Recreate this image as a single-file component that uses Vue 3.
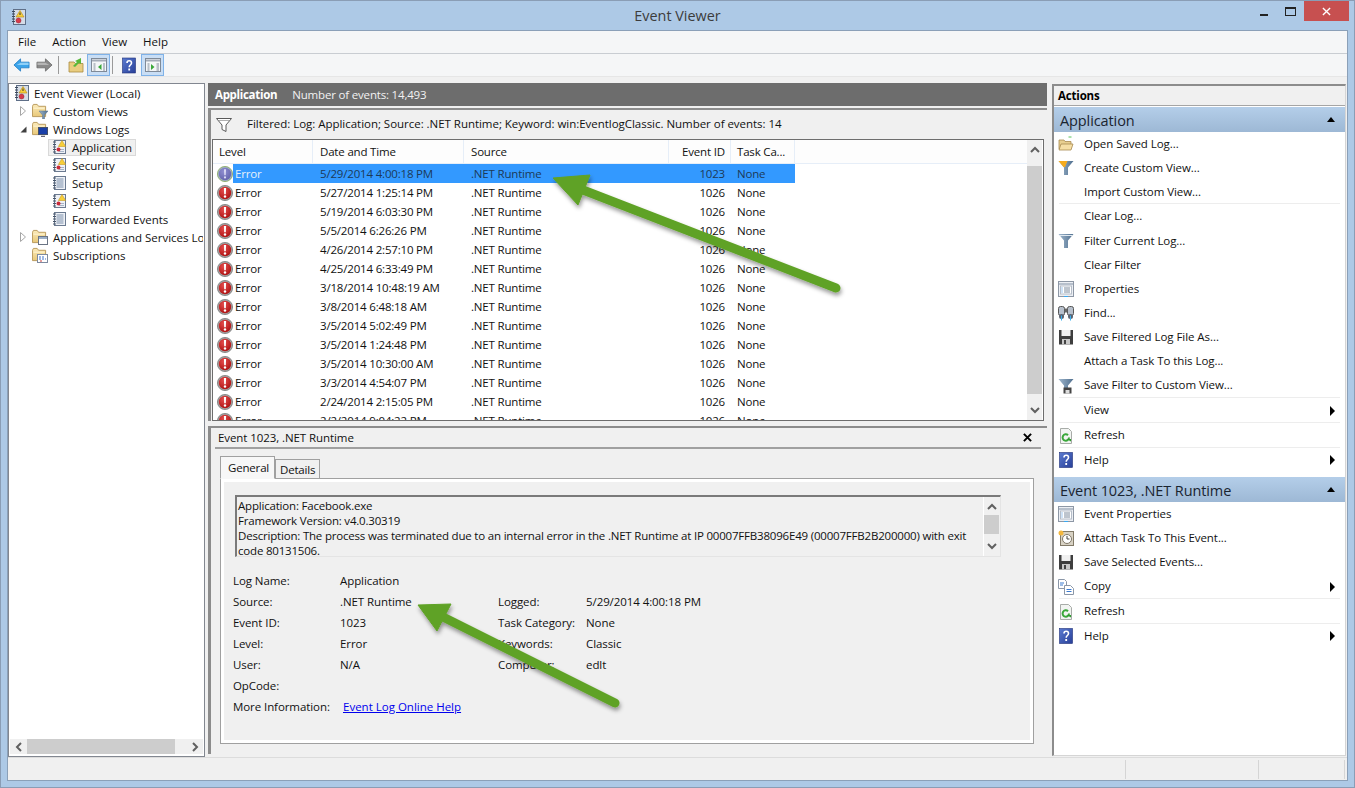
<script setup>
const menus = ['File', 'Action', 'View', 'Help']
const tree = [
  { t: 'Event Viewer (Local)', l: 0, i: 'i-evlog' },
  { t: 'Custom Views', l: 1, i: 'i-fold-funnel', x: 'closed' },
  { t: 'Windows Logs', l: 1, i: 'i-fold-mon', x: 'open' },
  { t: 'Application', l: 2, i: 'i-log-alert', sel: true },
  { t: 'Security', l: 2, i: 'i-log-alert' },
  { t: 'Setup', l: 2, i: 'i-log' },
  { t: 'System', l: 2, i: 'i-log-alert' },
  { t: 'Forwarded Events', l: 2, i: 'i-log' },
  { t: 'Applications and Services Logs', l: 1, i: 'i-fold-win', x: 'closed' },
  { t: 'Subscriptions', l: 1, i: 'i-fold-sub' },
]
const events = [
  ['5/29/2014 4:00:18 PM', '1023'],
  ['5/27/2014 1:25:14 PM', '1026'],
  ['5/19/2014 6:03:30 PM', '1026'],
  ['5/5/2014 6:26:26 PM', '1026'],
  ['4/26/2014 2:57:10 PM', '1026'],
  ['4/25/2014 6:33:49 PM', '1026'],
  ['3/18/2014 10:48:19 AM', '1026'],
  ['3/8/2014 6:48:18 AM', '1026'],
  ['3/5/2014 5:02:49 PM', '1026'],
  ['3/5/2014 1:24:48 PM', '1026'],
  ['3/5/2014 10:30:00 AM', '1026'],
  ['3/3/2014 4:54:07 PM', '1026'],
  ['2/24/2014 2:15:05 PM', '1026'],
  ['2/2/2014 9:04:22 PM', '1026'],
]
const fields = [
  ['Log Name:', 'Application', '', ''],
  ['Source:', '.NET Runtime', 'Logged:', '5/29/2014 4:00:18 PM'],
  ['Event ID:', '1023', 'Task Category:', 'None'],
  ['Level:', 'Error', 'Keywords:', 'Classic'],
  ['User:', 'N/A', 'Computer:', 'edlt'],
  ['OpCode:', '', '', ''],
]
const actionsA = [
  { t: 'Open Saved Log...', i: 'i-open' },
  { t: 'Create Custom View...', i: 'i-funnel-new' },
  { t: 'Import Custom View...', sep: true },
  { t: 'Clear Log...', tall: true },
  { t: 'Filter Current Log...', i: 'i-funnel' },
  { t: 'Clear Filter' },
  { t: 'Properties', i: 'i-props' },
  { t: 'Find...', i: 'i-find' },
  { t: 'Save Filtered Log File As...', i: 'i-save' },
  { t: 'Attach a Task To this Log...' },
  { t: 'Save Filter to Custom View...', i: 'i-funnel-save', sep: true, tall: true },
  { t: 'View', sub: true, sep: true, tall: true },
  { t: 'Refresh', i: 'i-refresh', sep: true, tall: true },
  { t: 'Help', i: 'i-help', sub: true },
]
const actionsB = [
  { t: 'Event Properties', i: 'i-props' },
  { t: 'Attach Task To This Event...', i: 'i-clock' },
  { t: 'Save Selected Events...', i: 'i-save' },
  { t: 'Copy', i: 'i-copy', sub: true, sep: true, tall: true },
  { t: 'Refresh', i: 'i-refresh', sep: true, tall: true },
  { t: 'Help', i: 'i-help', sub: true },
]
const sections = [
  { title: 'Application', items: actionsA },
  { title: 'Event 1023, .NET Runtime', items: actionsB },
]
</script>

<template>
  <div class="win">
    <svg class="sprite" aria-hidden="true">
      <defs>
        <radialGradient id="g-red" cx="40%" cy="30%" r="80%"><stop offset="0" stop-color="#e44c4c"/><stop offset="1" stop-color="#a80c0c"/></radialGradient>
        <radialGradient id="g-blue" cx="40%" cy="30%" r="80%"><stop offset="0" stop-color="#8f8ed0"/><stop offset="1" stop-color="#6060a8"/></radialGradient>
        <linearGradient id="g-funnel" x1="0" y1="0" x2="1" y2="0"><stop offset="0" stop-color="#9fb6cc"/><stop offset="1" stop-color="#4f6f8f"/></linearGradient>
        <linearGradient id="g-fold" x1="0" y1="0" x2="0" y2="1"><stop offset="0" stop-color="#fbeab8"/><stop offset="1" stop-color="#e8c878"/></linearGradient>
        <linearGradient id="g-help" x1="0" y1="0" x2="1" y2="1"><stop offset="0" stop-color="#5a7ad0"/><stop offset="1" stop-color="#283f98"/></linearGradient>
      </defs>
      <symbol id="i-err" viewBox="0 0 16 16">
        <circle cx="8" cy="8" r="7.6" fill="#a4a4a4" stroke="#6e6e6e" stroke-width=".7"/>
        <circle cx="8" cy="8" r="6.2" fill="url(#g-red)"/>
        <path d="M6.900 3h2.200l-.3 6.200h-1.600z" fill="#fff"/><circle cx="8" cy="11.500" r="1.200" fill="#fff"/>
      </symbol>
      <symbol id="i-err-sel" viewBox="0 0 16 16">
        <circle cx="8" cy="8" r="7.6" fill="#9fb0c0" stroke="#86a860" stroke-width=".8"/>
        <circle cx="8" cy="8" r="6.2" fill="url(#g-blue)"/>
        <path d="M7 3.2h2l-.3 6h-1.400z" fill="#dcdcf4"/><circle cx="8" cy="11.400" r="1.100" fill="#dcdcf4"/>
      </symbol>
      <symbol id="i-log" viewBox="0 0 16 16">
        <rect x="2.500" y="1.500" width="11" height="13" fill="#eef1f6" stroke="#6b7a90"/>
        <path d="M4.500 4h7M4.500 6h7M4.500 8h7M4.500 10h7M4.500 12h7" stroke="#7d90ab"/>
        <path d="M1 3h3M1 5.500h3M1 8h3M1 10.500h3M1 13h3" stroke="#48566a"/>
      </symbol>
      <symbol id="i-log-alert" viewBox="0 0 16 16">
        <rect x="2.500" y="1.500" width="11" height="13" fill="#eef1f6" stroke="#6b7a90"/>
        <path d="M1 3h3M1 5.500h3M1 8h3M1 10.500h3M1 13h3" stroke="#48566a"/>
        <path d="M7 10.500h5M7 12.500h5" stroke="#a8b4c6"/>
        <path d="M10 1.500l3.600 6h-7.200z" fill="#f7cf3a" stroke="#c79a20" stroke-width=".6"/>
        <circle cx="6.500" cy="10.500" r="2" fill="#c82a3a"/>
      </symbol>
      <symbol id="i-evlog" viewBox="0 0 16 16">
        <rect x="2.500" y=".5" width="12" height="15" fill="#d5dce6" stroke="#5f6f88"/>
        <path d="M1 2.500h3M1 5h3M1 7.500h3M1 10h3M1 12.500h3" stroke="#3e4a5c"/>
        <path d="M9 1.500l4 6.500h-8z" fill="#f7cf3a" stroke="#b88a10" stroke-width=".6"/>
        <path d="M9 3.500v2.500" stroke="#333"/>
        <circle cx="7.500" cy="11.500" r="2.500" fill="#d83a4a" stroke="#902030" stroke-width=".5"/>
      </symbol>
      <symbol id="i-folder" viewBox="0 0 16 16">
        <path d="M.5 3.500V14.500h14V3.500H7L5.500 1.500h-4z" fill="url(#g-fold)" stroke="#b8985a"/>
        <path d="M1.500 5.500h12" stroke="#fff6d8"/>
      </symbol>
      <symbol id="i-fold-funnel" viewBox="0 0 16 16">
        <use href="#i-folder" width="15" height="15"/>
        <path d="M7 8h9l-3.500 4v4h-2v-4z" fill="url(#g-funnel)" stroke="#56708a" stroke-width=".5"/>
      </symbol>
      <symbol id="i-fold-mon" viewBox="0 0 16 16">
        <use href="#i-folder" width="15" height="15"/>
        <rect x="6.500" y="6.500" width="9" height="7" fill="#1a3fa8" stroke="#44506a"/>
        <path d="M9 15.500h4" stroke="#667" stroke-width="1.500"/>
      </symbol>
      <symbol id="i-fold-win" viewBox="0 0 16 16">
        <use href="#i-folder" width="15" height="15"/>
        <rect x="6.500" y="7.500" width="9" height="8" fill="#fff" stroke="#6a7484"/>
        <path d="M7 9h8" stroke="#9cb0c8" stroke-width="2"/>
      </symbol>
      <symbol id="i-fold-sub" viewBox="0 0 16 16">
        <use href="#i-folder" width="15" height="15"/>
        <rect x="5.500" y="7.500" width="10" height="8" fill="#fff" stroke="#7d8aa0"/>
        <path d="M7 10h2M10 10h2M7 12h2M10 12h2M13 12h1" stroke="#3a70c8"/>
        <path d="M8 14h2" stroke="#c83a3a"/>
      </symbol>
      <symbol id="i-funnel-line" viewBox="0 0 16 16">
        <path d="M.5 1.500h15L10 8v6.500L6 12.500V8z" fill="#fff" stroke="#5a5a5a"/>
        <path d="M3 3.500h10" stroke="#b0b0b0"/>
      </symbol>
      <symbol id="i-funnel" viewBox="0 0 16 16">
        <path d="M.5 1h15L10 7.500V15H6V7.500z" fill="url(#g-funnel)"/>
        <path d="M2 2.500h12" stroke="#dfe8f0"/>
      </symbol>
      <symbol id="i-funnel-new" viewBox="0 0 16 16">
        <path d="M.5 1h15L10 7.500V15H6V7.500z" fill="url(#g-funnel)"/>
        <path d="M.5 1h9L7 7H5.500z" fill="#f5ab1e"/>
      </symbol>
      <symbol id="i-funnel-save" viewBox="0 0 16 16">
        <path d="M.5 1h15L10 7.500V10H6V7.500z" fill="url(#g-funnel)"/>
        <rect x="5.500" y="9.500" width="8" height="6" fill="#444"/><rect x="7.500" y="12" width="4" height="3.500" fill="#ddd"/>
      </symbol>
      <symbol id="i-open" viewBox="0 0 16 16">
        <path d="M1 4h5l1 1.500h6V13H1z" fill="#e8cf90" stroke="#a88a50" stroke-width=".8"/>
        <path d="M1 14l2-6h12l-2 6z" fill="#f6dfa6" stroke="#a88a50" stroke-width=".8"/>
        <path d="M10.500 1h3" stroke="#58c458"/>
      </symbol>
      <symbol id="i-props" viewBox="0 0 16 16">
        <rect x=".5" y=".5" width="15" height="15" fill="#eceff4" stroke="#8d97a5"/>
        <path d="M1 3h14" stroke="#b7c0cc" stroke-width="2"/>
        <rect x="2.500" y="5" width="11" height="8" fill="#fff" stroke="#b5bdc8"/>
        <path d="M6 7h6M6 9h6M6 11h6" stroke="#7d8a9c"/>
        <path d="M3.500 7h1M3.500 9h1M3.500 11h1" stroke="#3a8adf"/>
        <path d="M6 15.500h4" stroke="#3aa8ef"/>
      </symbol>
      <symbol id="i-find" viewBox="0 0 16 16">
        <rect x=".5" y="1.500" width="6" height="9" rx="2" fill="#b7c0cc" stroke="#555"/>
        <rect x="9.500" y="1.500" width="6" height="9" rx="2" fill="#b7c0cc" stroke="#555"/>
        <rect x="6.500" y="3.500" width="3" height="4" fill="#666"/>
        <circle cx="3.500" cy="11.500" r="2.500" fill="#5a6270"/><circle cx="12.500" cy="11.500" r="2.500" fill="#5a6270"/>
        <path d="M3.500 10.500v5M12.500 10.500v5" stroke="#3ab0ef"/>
      </symbol>
      <symbol id="i-save" viewBox="0 0 16 16">
        <path d="M1 1h14v14.500H1z" fill="#3e3e3e"/>
        <rect x="3.500" y="1" width="9" height="6" fill="#f0f0f0"/>
        <rect x="4" y="10" width="8" height="5.500" fill="#c9c9c9"/>
        <rect x="6" y="11" width="2" height="4" fill="#444"/>
      </symbol>
      <symbol id="i-refresh" viewBox="0 0 16 16">
        <path d="M2.500.5h8l3 3v12h-11z" fill="#f2f4f2" stroke="#a8aca8"/>
        <path d="M11 9.500a3.200 3.200 0 1 1-1-2.300" fill="none" stroke="#3aa83a" stroke-width="2"/>
        <path d="M8.500 11h4.500v2.500z" fill="#2e9a2e"/>
      </symbol>
      <symbol id="i-help" viewBox="0 0 16 16">
        <rect x="1.500" y=".5" width="13" height="15" fill="url(#g-help)" stroke="#1e2f78" stroke-width=".6"/>
        <path d="M6 5.500c0-3 4.500-3 4.500 0 0 2-2.300 2-2.300 4.200" fill="none" stroke="#fff" stroke-width="1.600"/>
        <rect x="7.300" y="11" width="1.800" height="2" fill="#fff"/>
      </symbol>
      <symbol id="i-clock" viewBox="0 0 16 16">
        <rect x="2.500" y="1.500" width="13" height="14" fill="#d8d2c4" stroke="#827a68"/>
        <circle cx="9" cy="9" r="4.500" fill="#fff" stroke="#807868"/>
        <path d="M9 6v3h2.500" fill="none" stroke="#444"/>
        <circle cx="3" cy="3" r="2.500" fill="#f3b63c"/>
      </symbol>
      <symbol id="i-copy" viewBox="0 0 16 16">
        <path d="M.5.500h6l2 2v7h-8z" fill="#fff" stroke="#8b97a8"/>
        <path d="M6.500 6.500h6l3 3v6h-9z" fill="#fff" stroke="#8b97a8"/>
        <path d="M2 4h4M2 6h3M8.500 10.500h5M8.500 12.500h5" stroke="#3a7ad0"/>
      </symbol>
      <symbol id="i-back" viewBox="0 0 18 16">
        <path d="M1 8l7-6.500V5h9v6H8v3.500z" fill="#3ca4ea" stroke="#1a78c0" stroke-width=".8"/>
        <path d="M8 5.500h8.500V8H4z" fill="#8fd0f8"/>
      </symbol>
      <symbol id="i-fwd" viewBox="0 0 18 16">
        <path d="M17 8l-7-6.500V5H1v6h9v3.500z" fill="#8a8a8a" stroke="#666" stroke-width=".8"/>
        <path d="M10 5.500H1.500V8H14z" fill="#b5b5b5"/>
      </symbol>
      <symbol id="i-up" viewBox="0 0 16 16">
        <path d="M1 5h5l1.500 1.500h7.500V15H1z" fill="#e9cd80" stroke="#a88a40" stroke-width=".8"/>
        <path d="M5 9l4-4-2-1 6-3v6l-2-1-4 4z" fill="#58b83a"/>
      </symbol>
      <symbol id="i-tree" viewBox="0 0 16 14">
        <rect x=".5" y=".5" width="15" height="13" fill="#f4f6f8" stroke="#7f8a98"/>
        <path d="M1 2.500h14" stroke="#a4acb8" stroke-width="2"/>
        <path d="M2.500 6h2M2.500 8h2M2.500 10h2M2.500 12h2M12 6h2M12 8h2M12 10h2M12 12h2" stroke="#7f8a98"/>
        <path d="M10.500 6v6L7 9z" fill="#3aa83a"/>
      </symbol>
      <symbol id="i-pane" viewBox="0 0 16 14">
        <rect x=".5" y=".5" width="15" height="13" fill="#f4f6f8" stroke="#7f8a98"/>
        <path d="M1 2.500h14" stroke="#a4acb8" stroke-width="2"/>
        <path d="M2.500 6h2M2.500 8h2M2.500 10h2M2.500 12h2M11.500 6h2.500M11.500 8h2.500M11.500 10h2.500M11.500 12h2.500" stroke="#7f8a98"/>
        <path d="M6 6v6l3.500-3z" fill="#3aa83a"/>
      </symbol>
      <symbol id="i-chev-up" viewBox="0 0 10 7"><path d="M1 6l4-4 4 4" fill="none" stroke="#606060" stroke-width="2"/></symbol>
      <symbol id="i-chev-down" viewBox="0 0 10 7"><path d="M1 1l4 4 4-4" fill="none" stroke="#606060" stroke-width="2"/></symbol>
      <symbol id="i-chev-left" viewBox="0 0 7 10"><path d="M6 1L2 5l4 4" fill="none" stroke="#606060" stroke-width="2"/></symbol>
      <symbol id="i-chev-right" viewBox="0 0 7 10"><path d="M1 1l4 4-4 4" fill="none" stroke="#606060" stroke-width="2"/></symbol>
      <symbol id="i-x" viewBox="0 0 10 10"><path d="M1 1l8 8M9 1l-8 8" stroke="#000" stroke-width="2.200"/></symbol>
      <symbol id="i-closed" viewBox="0 0 6 10"><path d="M.5.500L5.500 5 .5 9.500z" fill="#fff" stroke="#a6a6a6"/></symbol>
      <symbol id="i-opened" viewBox="0 0 7 7"><path d="M6.500.5v6H.5z" fill="#404040"/></symbol>
    </svg>

    <header class="title">
      <svg class="t-ico"><use href="#i-evlog"/></svg>
      <span class="t-text">Event Viewer</span>
      <div class="caps">
        <span class="cap"><i class="c-min"></i></span>
        <span class="cap"><i class="c-max"></i></span>
        <span class="cap close"><svg class="c-x" viewBox="0 0 10 10"><path d="M1 1l8 8M9 1l-8 8" stroke="#fff" stroke-width="1.500"/></svg></span>
      </div>
    </header>

    <div class="client">
      <nav class="menu"><span v-for="m in menus" :key="m">{{ m }}</span></nav>

      <div class="tools">
        <svg class="tb arr"><use href="#i-back"/></svg>
        <svg class="tb arr"><use href="#i-fwd"/></svg>
        <i class="tsep"></i>
        <svg class="tb up"><use href="#i-up"/></svg>
        <span class="tbtn"><svg class="tb2"><use href="#i-tree"/></svg></span>
        <i class="tsep"></i>
        <svg class="tb qm"><use href="#i-help"/></svg>
        <span class="tbtn"><svg class="tb2"><use href="#i-pane"/></svg></span>
      </div>

      <div class="main">
        <aside class="treebox">
          <div class="treelist">
            <div v-for="n in tree" :key="n.t" class="node" :class="'lv' + n.l">
              <span v-if="n.l === 1" class="exp">
                <svg v-if="n.x === 'closed'" class="ex1"><use href="#i-closed"/></svg>
                <svg v-if="n.x === 'open'" class="ex2"><use href="#i-opened"/></svg>
              </span>
              <span class="wrap" :class="{ picked: n.sel }">
                <svg class="ic"><use :href="'#' + n.i"/></svg>
                <span>{{ n.t }}</span>
              </span>
            </div>
          </div>
          <div class="hbar">
            <svg class="ch-h"><use href="#i-chev-left"/></svg>
            <i class="hthumb"></i>
            <svg class="ch-h last"><use href="#i-chev-right"/></svg>
          </div>
        </aside>

        <section class="mid">
          <div class="midhead"><b>Application</b><span>Number of events: 14,493</span></div>

          <div class="listpane">
            <div class="filter">
              <svg class="ic"><use href="#i-funnel-line"/></svg>
              <span>Filtered: Log: Application; Source: .NET Runtime; Keyword: win:EventlogClassic. Number of events: 14</span>
            </div>
            <div class="listbox">
              <div class="table">
                <div class="thead">
                  <span class="c-level">Level</span>
                  <span class="c-date">Date and Time</span>
                  <span class="c-src">Source</span>
                  <span class="c-id">Event ID</span>
                  <span class="c-task">Task Ca...</span>
                  <span class="c-rest"></span>
                </div>
                <div class="rows">
                  <div v-for="(e, i) in events" :key="i" class="row" :class="{ on: i === 0 }">
                    <svg class="ic err"><use :href="i === 0 ? '#i-err-sel' : '#i-err'"/></svg>
                    <div class="cells">
                      <span class="c-lv">Error</span>
                      <span class="c-date">{{ e[0] }}</span>
                      <span class="c-src">.NET Runtime</span>
                      <span class="c-id">{{ e[1] }}</span>
                      <span class="c-task">None</span>
                    </div>
                  </div>
                </div>
              </div>
              <div class="vbar">
                <svg class="ch-v"><use href="#i-chev-up"/></svg>
                <i class="vthumb"></i>
                <svg class="ch-v"><use href="#i-chev-down"/></svg>
              </div>
            </div>
          </div>

          <div class="detail">
            <div class="dhead"><span>Event 1023, .NET Runtime</span><svg class="dx"><use href="#i-x"/></svg></div>
            <div class="tabs">
              <span class="tab active">General</span>
              <span class="tab">Details</span>
            </div>
            <div class="tabbody">
              <div class="msg">
                <div class="msgtext">
                  <div>Application: Facebook.exe</div>
                  <div>Framework Version: v4.0.30319</div>
                  <div>Description: The process was terminated due to an internal error in the .NET Runtime at IP 00007FFB38096E49 (00007FFB2B200000) with exit</div>
                  <div>code 80131506.</div>
                </div>
                <div class="msgbar">
                  <svg class="ch-v"><use href="#i-chev-up"/></svg>
                  <i class="mthumb"></i>
                  <svg class="ch-v"><use href="#i-chev-down"/></svg>
                </div>
              </div>
              <div class="fields">
                <template v-for="f in fields" :key="f[0]">
                  <span>{{ f[0] }}</span><span>{{ f[1] }}</span><span>{{ f[2] }}</span><span>{{ f[3] }}</span>
                </template>
                <span>More Information:</span>
                <a class="link">Event Log Online Help</a>
              </div>
            </div>
          </div>
        </section>

        <aside class="actions">
          <div class="a-head">Actions</div>
          <div v-for="s in sections" :key="s.title" class="a-sec">
            <div class="a-title"><span>{{ s.title }}</span><i class="tri-up"></i></div>
            <div v-for="it in s.items" :key="it.t" class="a-item" :class="{ tall: it.tall, sep: it.sep }">
              <span class="a-ic"><svg v-if="it.i" class="ic"><use :href="'#' + it.i"/></svg></span>
              <span class="a-t">{{ it.t }}</span>
              <i v-if="it.sub" class="tri-r"></i>
            </div>
          </div>
        </aside>
      </div>

      <footer class="status"><span class="s1"></span><span class="s2"></span><span class="s3"></span></footer>
    </div>

    <svg class="callouts" viewBox="0 0 1355 788">
      <defs>
        <filter id="sh" x="-10%" y="-10%" width="120%" height="130%"><feDropShadow dx="1" dy="3" stdDeviation="2" flood-color="#000" flood-opacity=".4"/></filter>
      </defs>
      <g filter="url(#sh)" fill="#5fa226" stroke="#5fa226">
        <path d="M583 190L836 288" fill="none" stroke-width="9" stroke-linecap="round"/>
        <path d="M553 178L590 175L578 205z" stroke-width="1"/>
        <path d="M443 617L615 703" fill="none" stroke-width="9" stroke-linecap="round"/>
        <path d="M418 605L451 604L437 631z" stroke-width="1"/>
      </g>
    </svg>
  </div>
</template>

<style>
html, body { margin: 0; }
</style>

<style scoped>
.win {
  position: relative;
  width: 1355px;
  height: 788px;
  box-sizing: border-box;
  border: 1px solid #8a9db5;
  background: #adc9e6;
  padding: 0 6px 6px;
  display: flex;
  flex-direction: column;
  overflow: hidden;
  font: 11.5px/15px "Open Sans", "Noto Sans", sans-serif;
  letter-spacing: -0.18px;
  color: #111;
}
.sprite { position: absolute; width: 0; height: 0; }
svg { display: block; flex: none; }
.ic { width: 16px; height: 16px; }

.title { height: 29px; flex: none; display: flex; align-items: flex-start; position: relative; }
.t-ico { width: 16px; height: 16px; margin: 8px 0 0 4px; }
.t-text { position: absolute; left: 0; right: 0; top: 5px; text-align: center; font-size: 14.4px; letter-spacing: 0; line-height: 20px; color: #3c3c3c; }
.caps { margin-left: auto; display: flex; margin-right: -6px; z-index: 1; }
.cap { width: 27px; height: 20px; display: flex; align-items: center; justify-content: center; }
.cap.close { width: 45px; background: #c75050; margin-right: 5px; }
.c-min { width: 8px; height: 2px; background: #222; margin-top: 7px; display: block; }
.c-max { width: 9px; height: 6px; border: 1px solid #222; border-top-width: 2px; display: block; }
.c-x { width: 9px; height: 9px; }

.client {
  flex: 1;
  min-height: 0;
  border: 1px solid #8ba0b8;
  background: #f0f0f0;
  display: flex;
  flex-direction: column;
}
.menu {
  height: 22px;
  flex: none;
  background: #f5f6f7;
  border-bottom: 1px solid #c9cdd2;
  display: flex;
  align-items: center;
  gap: 16px;
  padding-left: 10px;
  letter-spacing: 0;
}
.menu span { margin-top: -2px; }
.tools {
  height: 22px;
  flex: none;
  background: #f5f6f7;
  border-bottom: 1px solid #e6e6e6;
  display: flex;
  align-items: center;
  padding-left: 5px;
}
.tb { width: 16px; height: 16px; }
.arr { width: 17px; margin-right: 6px; }
.up { margin-right: 3px; }
.qm { margin-left: -1px; height: 17px; margin-right: 4px; }
.tsep { width: 1px; height: 18px; background: #9a9a9a; margin: 0 9px 0 -1px; }
.tbtn { width: 23px; height: 22px; background: #c9def5; border: 1px solid #7fb2e8; box-sizing: border-box; display: flex; align-items: center; justify-content: center; margin-right: 3px; }
.tb2 { width: 16px; height: 14px; }

.main { flex: 1; min-height: 0; display: flex; padding: 6px 1px 0 0; background: #f0f0f0; }

.treebox {
  width: 197px;
  flex: none;
  box-sizing: border-box;
  height: 674px;
  border: 1px solid #828790;
  background: #fff;
  display: flex;
  flex-direction: column;
  padding: 0 1px 1px;
}
.treelist { flex: 1; min-height: 0; overflow: hidden; letter-spacing: 0; }
.node { height: 18px; display: flex; align-items: center; white-space: nowrap; }
.lv0 { padding-left: 0; }
.lv1 { padding-left: 2px; }
.lv2 { padding-left: 38px; }
.exp { width: 18px; flex: none; display: flex; justify-content: flex-start; padding-left: 8px; box-sizing: border-box; }
.ex1 { width: 6px; height: 10px; }
.ex2 { width: 7px; height: 7px; }
.wrap { display: inline-flex; align-items: center; gap: 4px; height: 17px; padding: 0 3px; box-sizing: border-box; border: 1px solid transparent; }
.lv1 .wrap { gap: 5px; padding: 0 1px; }
.wrap.picked { background: #f0f0f0; border-color: #d9d9d9; }
.hbar { height: 15px; flex: none; margin-bottom: 1px; background: #f0f0f0; display: flex; align-items: center; padding: 0 4px 0 5px; }
.hthumb { width: 148px; height: 15px; background: #cdcdcd; display: block; margin-left: 5px; flex: none; }
.ch-h { width: 7px; height: 10px; }
.ch-h.last { margin-left: auto; }
.ch-v { width: 10px; height: 7px; }

.mid { width: 839px; flex: none; margin-left: 3px; display: flex; flex-direction: column; }
.midhead {
  height: 23px;
  flex: none;
  background: #6d6d6d;
  color: #f2f2f2;
  display: flex;
  align-items: center;
  gap: 14px;
  padding-left: 7px;
}
.midhead b { font-weight: 700; color: #fff; letter-spacing: -0.3px; margin-right: 1px; }
.listpane {
  height: 311px;
  flex: none;
  margin: 2px 0 0;
  border-top: 2px solid #8c8c8c;
  border-left: 3px solid #8c8c8c;
  padding-left: 1px;
  display: flex;
  flex-direction: column;
}
.filter { height: 28px; margin-top: 1px; flex: none; display: flex; align-items: center; gap: 15px; padding: 0 0 3px 4px; width: 832px; box-sizing: border-box; letter-spacing: -0.03px; }
.filter .ic { margin-top: 3px; }
.listbox {
  flex: 1;
  min-height: 0;
  width: 832px;
  box-sizing: border-box;
  border: 1px solid #6d6d6d;
  background: #fff;
  display: flex;
  overflow: hidden;
}
.table { flex: 1; min-width: 0; overflow: hidden; }
.thead {
  height: 23px;
  display: grid;
  grid-template-columns: 100px 151px 205px 62px 64px 1fr;
  border-bottom: 1px solid #e6eef8;
  background: #fdfdfd;
  align-items: stretch;
}
.thead span { display: flex; align-items: center; border-right: 1px solid #e6eef8; padding-left: 7px; box-sizing: border-box; }
.thead .c-level { padding-left: 6px; }
.thead .c-id { padding-left: 13px; }
.thead .c-task { padding-left: 6px; }
.thead .c-rest { border-right: 0; }
.row { height: 19px; display: flex; align-items: center; padding-left: 4px; }
.err { width: 16px; height: 16px; }
.cells {
  width: 562px;
  height: 19px;
  box-sizing: border-box;
  padding-bottom: 1px;
  display: grid;
  grid-template-columns: 80px 151px 205px 62px 64px;
  align-items: center;
}
.row.on .cells { background: #3399ff; color: #1c3a58; }
.row.on .c-lv { color: #e6f0fa; }
.c-lv { padding-left: 2px; }
.cells .c-date, .cells .c-src { padding-left: 7px; }
.cells .c-id { text-align: right; padding-right: 6px; }
.cells .c-task { padding-left: 6px; }
.vbar { width: 15px; flex: none; margin-right: 1px; background: #f0f0f0; display: flex; flex-direction: column; align-items: center; justify-content: space-between; padding: 6px 0 6px; box-sizing: border-box; }
.vthumb { width: 15px; height: 228px; background: #cdcdcd; display: block; flex: none; }

.detail {
  height: 326px;
  flex: none;
  margin-top: 5px;
  border-top: 2px solid #8c8c8c;
  border-left: 3px solid #8c8c8c;
  display: flex;
  flex-direction: column;
}
.dhead {
  height: 21px;
  flex: none;
  margin-left: 4px;
  width: 826px;
  border-bottom: 2px solid #a0a0a0;
  display: flex;
  align-items: center;
  justify-content: space-between;
  padding: 0 9px 0 3px;
  box-sizing: border-box;
  letter-spacing: -0.08px;
}
.dx { width: 9px; height: 9px; }
.tabs { display: flex; align-items: flex-end; height: 29px; flex: none; padding-left: 9px; }
.tab { height: 19px; padding: 0 4px; border: 1px solid #a0a0a0; border-bottom: 0; box-sizing: border-box; background: #f0f0f0; display: flex; align-items: center; }
.tab.active { height: 23px; width: 55px; padding-left: 7px; background: #f7f7f7; margin-bottom: -1px; position: relative; z-index: 1; border-bottom: 1px solid #f7f7f7; }
.tabbody {
  margin-left: 9px;
  width: 814px;
  height: 266px;
  flex: none;
  box-sizing: border-box;
  border: 1px solid #a0a0a0;
  outline: 3px solid #fff;
  outline-offset: -4px;
  padding: 16px 0 0 14px;
  background: #f0f0f0;
}
.msg {
  width: 766px;
  height: 62px;
  box-sizing: border-box;
  border: 1px solid #e4e4e4;
  border-top: 2px solid #7a7a7a;
  border-left: 2px solid #7a7a7a;
  display: flex;
  justify-content: space-between;
}
.msgtext { padding: 1px 0 0 1px; white-space: nowrap; letter-spacing: -0.195px; }
.msgbar { width: 16px; flex: none; margin-right: 1px; display: flex; flex-direction: column; align-items: center; justify-content: space-between; padding: 6px 0 6px; box-sizing: border-box; border-left: 1px solid #fff; }
.mthumb { width: 15px; height: 19px; background: #cdcdcd; display: block; flex: none; margin-bottom: 4px; }
.fields {
  margin-top: 13px;
  display: grid;
  grid-template-columns: 107px 158px 88px 1fr;
  grid-auto-rows: 21px;
  align-items: center;
  margin-left: -2px;
  letter-spacing: -0.08px;
}
.link { color: #0000ee; text-decoration: underline; padding-left: 3px; grid-column: 2 / span 2; letter-spacing: 0; }

.actions {
  width: 294px;
  flex: none;
  margin-left: 5px;
  margin-top: 1px;
  height: 672px;
  box-sizing: border-box;
  border-top: 2px solid #8c8c8c;
  border-left: 2px solid #8c8c8c;
  border-bottom: 1px solid #d5d5d5;
  border-right: 1px solid #d5d5d5;
  background: #fff;
}
.a-head { height: 20px; box-sizing: border-box; background: #f0f0f0; border-bottom: 1px solid #a5a5a5; font-weight: 700; display: flex; align-items: center; padding-left: 4px; color: #000; margin-bottom: 1px; }
.a-sec { margin-bottom: 5px; }
.a-title {
  height: 25px;
  background: linear-gradient(#b4cee9, #9db8d5);
  display: flex;
  align-items: center;
  justify-content: space-between;
  font-size: 14.5px;
  letter-spacing: -0.1px;
  padding: 1px 10px 0 6px;
  box-sizing: border-box;
  color: #1a2430;
}
.tri-up { width: 0; height: 0; border-left: 4.500px solid transparent; border-right: 4.500px solid transparent; border-bottom: 5px solid #000; display: block; margin-top: -2px; }
.a-item { height: 24px; box-sizing: border-box; display: flex; align-items: center; position: relative; padding: 0 10px 0 4px; }
.a-item.tall { height: 25px; }
.a-item.sep::after { content: ""; position: absolute; left: 5px; right: 5px; bottom: 0; height: 1px; background: #ededed; }
.a-ic { width: 26px; flex: none; }
.a-t { flex: 1; margin-top: -2px; letter-spacing: -0.06px; }
.tri-r { width: 0; height: 0; border-top: 5px solid transparent; border-bottom: 5px solid transparent; border-left: 5px solid #000; display: block; }
.status { height: 23px; flex: none; background: #f0f0f0; border-top: 1px solid #dcdcdc; box-sizing: border-box; display: flex; justify-content: flex-end; padding: 2px 0 1px 0; }
.status span { display: block; border-left: 1px solid #d5d5d5; }
.status .s1 { width: 132px; }
.status .s2 { width: 85px; }
.status .s3 { width: 2px; }
.callouts { position: absolute; left: -1px; top: -1px; width: 1355px; height: 788px; pointer-events: none; }
</style>
